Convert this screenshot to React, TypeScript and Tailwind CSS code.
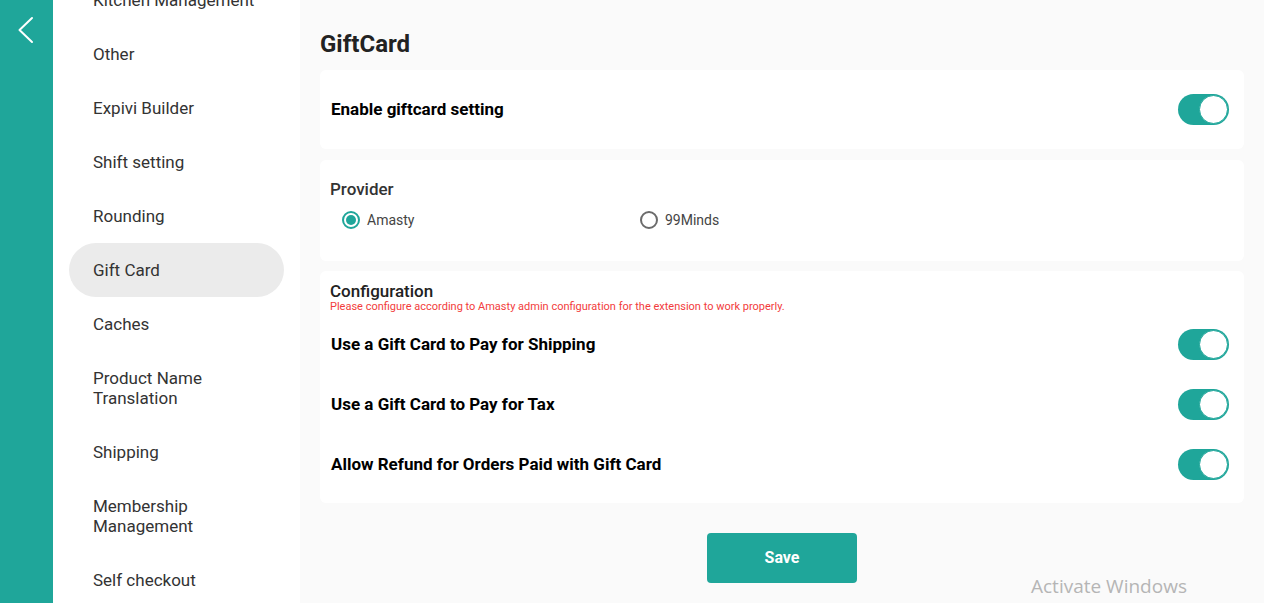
const menuItems = [
  'Kitchen Management',
  'Other',
  'Expivi Builder',
  'Shift setting',
  'Rounding',
  'Gift Card',
  'Caches',
  'Product Name Translation',
  'Shipping',
  'Membership Management',
  'Self checkout',
]

function Toggle() {
  return (
    <div className="relative h-[31px] w-[51px] shrink-0 rounded-full bg-[#1fa69a]">
      <div className="absolute right-px top-px h-[29px] w-[29px] rounded-full border border-[#1fa69a] bg-white" />
    </div>
  )
}

function Radio({ label, checked }: { label: string; checked?: boolean }) {
  return (
    <label className="flex items-center gap-[7px]">
      <span
        className={
          checked
            ? 'flex h-[18px] w-[18px] items-center justify-center rounded-full border-2 border-[#1fa69a]'
            : 'flex h-[18px] w-[18px] items-center justify-center rounded-full border-2 border-[#6b6b6b]'
        }
      >
        {checked ? <span className="h-[10px] w-[10px] rounded-full bg-[#1fa69a]" /> : null}
      </span>
      <span className="text-sm text-[#444]">{label}</span>
    </label>
  )
}

function SettingRow({ label }: { label: string }) {
  return (
    <div className="flex h-[60px] items-center justify-between pl-[11px] pr-[15px]">
      <span className="pt-[2px] text-[17px] font-bold text-black">{label}</span>
      <Toggle />
    </div>
  )
}

export default function App() {
  return (
    <div className="relative flex h-[603px] w-full overflow-hidden bg-[#fafafa] font-['Roboto',sans-serif]">
      <div className="w-[53px] shrink-0 bg-[#1fa69a]">
        <svg width="53" height="60" viewBox="0 0 53 60" fill="none">
          <polyline points="32,18 19.5,30 32,42" stroke="white" strokeWidth="2" strokeLinecap="round" strokeLinejoin="round" />
        </svg>
      </div>

      <aside className="w-[247px] shrink-0 overflow-hidden bg-white px-4">
        <ul className="-mt-[27px]">
          {menuItems.map((item) => (
            <li
              key={item}
              className={
                item === 'Gift Card'
                  ? 'rounded-full bg-[#ebebeb] py-[17px] pl-6 pr-6 text-[17px] leading-5 text-[#333]'
                  : 'py-[17px] pl-6 pr-6 text-[17px] leading-5 text-[#333]'
              }
            >
              {item}
            </li>
          ))}
        </ul>
      </aside>

      <main className="flex-1 px-5 pt-[28px]">
        <h1 className="mb-[10px] text-2xl font-bold leading-8 text-[#222]">GiftCard</h1>

        <section className="flex h-[79px] items-center justify-between rounded-md bg-white pl-[11px] pr-[15px]">
          <span className="text-[17px] font-bold text-black">Enable giftcard setting</span>
          <Toggle />
        </section>

        <section className="mt-[11px] h-[101px] rounded-md bg-white px-[10px] pt-[18px]">
          <h2 className="text-[17px] font-medium leading-[22px] text-[#333]">Provider</h2>
          <div className="mt-[10px] flex pl-3">
            <div className="w-[298px]">
              <Radio label="Amasty" checked />
            </div>
            <Radio label="99Minds" />
          </div>
        </section>

        <section className="mt-[10px] h-[232px] rounded-md bg-white pt-[10px]">
          <div className="px-[10px]">
            <h2 className="text-[17px] font-medium leading-5 text-[#222]">Configuration</h2>
            <p className="text-[11px] leading-3 text-[#f23c3c]">
              Please configure according to Amasty admin configuration for the extension to work properly.
            </p>
          </div>
          <div className="mt-px">
            <SettingRow label="Use a Gift Card to Pay for Shipping" />
            <SettingRow label="Use a Gift Card to Pay for Tax" />
            <SettingRow label="Allow Refund for Orders Paid with Gift Card" />
          </div>
        </section>

        <div className="mt-[30px] flex justify-center">
          <button className="h-[50px] w-[150px] rounded bg-[#1fa69a] text-base font-bold text-white">Save</button>
        </div>
      </main>

      <div className="pointer-events-none absolute left-[1031px] top-[572px] font-['Open_Sans',sans-serif] text-[19px] text-[#b5b5b5]">
        Activate Windows
      </div>
    </div>
  )
}
